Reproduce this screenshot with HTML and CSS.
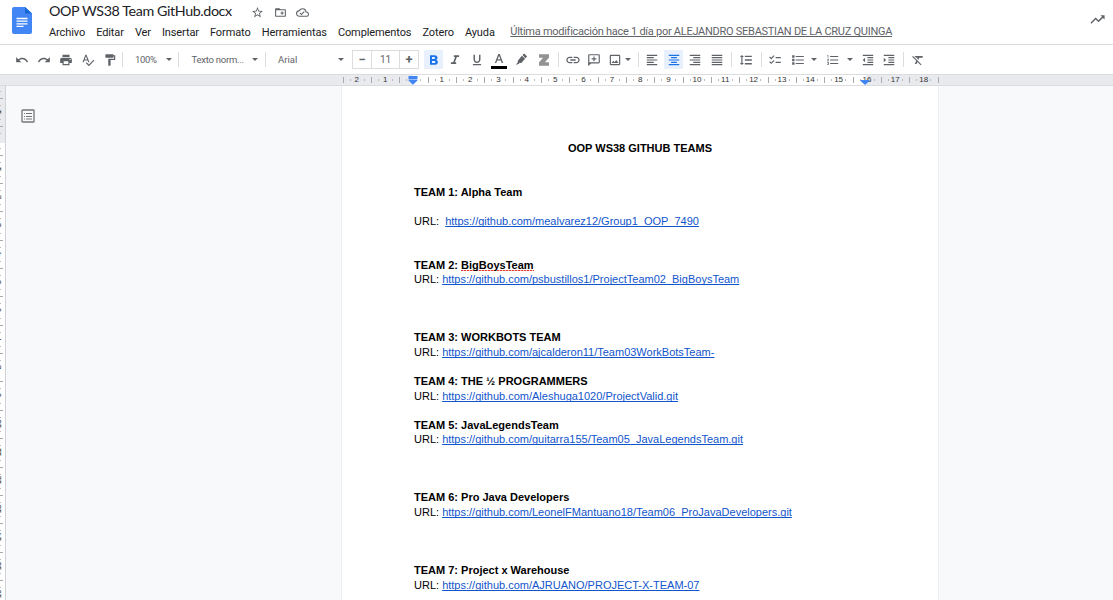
FILE: index.html
```html
<!DOCTYPE html>
<html lang="es">
<head>
<meta charset="utf-8">
<title>OOP WS38 Team GitHub.docx</title>
<link rel="stylesheet" href="styles.css">
</head>
<body>
<header class="header">
  <svg class="logo" viewBox="0 0 20 27"><path fill="#4285f4" d="M2 0h11l7 6.500V25a2 2 0 0 1-2 2H2a2 2 0 0 1-2-2V2a2 2 0 0 1 2-2z"/><path fill="#1967d2" d="M13 0l7 6.500h-7z"/><path stroke="#fff" stroke-width="1.300" d="M4.500 11.500h11M4.500 14.200h11M4.500 16.900h11M4.500 19.400h7"/></svg>
  <div class="heading">
    <div class="title-row">
      <span class="title">OOP WS38 Team GitHub.docx</span>
      <svg class="ic small" viewBox="0 0 24 24"><path d="M22 9.240l-7.190-.62L12 2 9.190 8.630 2 9.240l5.460 4.730L5.820 21 12 17.270 18.180 21l-1.630-7.030L22 9.240zM12 15.400l-3.760 2.270 1-4.280-3.320-2.880 4.380-.38L12 6.100l1.710 4.040 4.380.38-3.320 2.880 1 4.280L12 15.400z"/></svg>
      <svg class="ic small" viewBox="0 0 24 24"><path d="M20 6h-8l-2-2H4c-1.100 0-2 .9-2 2v12c0 1.100.9 2 2 2h16c1.100 0 2-.9 2-2V8c0-1.100-.9-2-2-2zm0 12H4V8h16v10zm-8-4h2v2h2v-2h2v-2h-2v-2h-2v2h-2z"/></svg>
      <svg class="ic small" viewBox="0 0 24 24"><path d="M19.350 10.040A7.490 7.490 0 0 0 12 4C9.110 4 6.600 5.640 5.350 8.040A5.994 5.994 0 0 0 0 14c0 3.310 2.690 6 6 6h13c2.760 0 5-2.240 5-5 0-2.640-2.050-4.780-4.650-4.960zM19 18H6c-2.210 0-4-1.790-4-4 0-2.050 1.530-3.760 3.560-3.970l1.070-.11.5-.95A5.469 5.469 0 0 1 12 6c2.620 0 4.880 1.860 5.390 4.430l.3 1.500 1.530.11A2.980 2.980 0 0 1 22 15c0 1.650-1.350 3-3 3zm-9-3.820l-2.090-2.090L6.500 13.500 10 17l6.010-6.010-1.410-1.410z"/></svg>
    </div>
    <nav class="menu">
      <span>Archivo</span><span>Editar</span><span>Ver</span><span>Insertar</span><span>Formato</span><span>Herramientas</span><span>Complementos</span><span>Zotero</span><span>Ayuda</span>
      <a class="modified">Última modificación hace 1 día por ALEJANDRO SEBASTIAN DE LA CRUZ QUINGA</a>
    </nav>
  </div>
  <svg class="ic trend" viewBox="0 0 24 24"><path d="M16 6l2.290 2.290-4.880 4.880-4-4L2 16.590 3.410 18l6-6 4 4 6.300-6.290L22 12V6z"/></svg>
</header>

<div class="toolbar">
  <span class="cell"><svg class="ic" viewBox="0 0 24 24"><path d="M12.500 8c-2.650 0-5.050.99-6.900 2.600L2 7v9h9l-3.620-3.620c1.390-1.160 3.160-1.880 5.120-1.880 3.540 0 6.550 2.310 7.600 5.500l2.370-.78C21.080 11.030 17.150 8 12.500 8z"/></svg></span>
  <span class="cell"><svg class="ic" viewBox="0 0 24 24"><path d="M18.400 10.600C16.550 8.990 14.150 8 11.500 8c-4.650 0-8.580 3.030-9.960 7.220L3.900 16c1.050-3.190 4.050-5.500 7.600-5.500 1.950 0 3.730.72 5.120 1.880L13 16h9V7l-3.600 3.600z"/></svg></span>
  <span class="cell"><svg class="ic" viewBox="0 0 24 24"><path d="M19 8H5c-1.660 0-3 1.340-3 3v6h4v4h12v-4h4v-6c0-1.660-1.340-3-3-3zm-3 11H8v-5h8v5zm3-7c-.55 0-1-.45-1-1s.45-1 1-1 1 .45 1 1-.45 1-1 1zm-1-9H6v4h12V3z"/></svg></span>
  <span class="cell"><svg class="ic" viewBox="0 0 24 24"><path d="M12.450 16h2.090L9.430 3H7.570L2.460 16h2.090l1.120-3h5.640l1.140 3zm-6.020-5L8.500 5.480 10.570 11H6.430zm15.160.59l-8.090 8.090L9.830 16l-1.410 1.410 5.090 5.090L23 13l-1.410-1.410z"/></svg></span>
  <span class="cell"><svg class="ic" viewBox="0 0 24 24"><path d="M18 4V3c0-.55-.45-1-1-1H5c-.55 0-1 .45-1 1v4c0 .55.450 1 1 1h12c.55 0 1-.45 1-1V6h1v4H9v11c0 .55.450 1 1 1h2c.55 0 1-.45 1-1v-9h8V4h-3z"/></svg></span>
  <i class="sep"></i>
  <span class="select zoom">100%<i class="arrow"></i></span>
  <i class="sep"></i>
  <span class="select style">Texto norm...<i class="arrow"></i></span>
  <i class="sep"></i>
  <span class="select font">Arial<i class="arrow"></i></span>
  <span class="size"><b>−</b><span>11</span><b>+</b></span>
  <span class="cell on"><svg class="ic bold" viewBox="0 0 24 24"><path d="M15.600 11.790c.97-.67 1.650-1.770 1.650-2.790 0-2.260-1.750-4-4-4H6v14h8.040c2.090 0 3.710-1.700 3.710-3.790 0-1.520-.86-2.820-2.150-3.420zM9 7.500h3c.83 0 1.500.67 1.500 1.500s-.67 1.500-1.500 1.500H9v-3zm3.500 9H9v-3h3.500c.83 0 1.500.67 1.500 1.500s-.67 1.500-1.500 1.500z"/></svg></span>
  <span class="cell"><svg class="ic" viewBox="0 0 24 24"><path d="M10 4v3h2.210l-3.420 9H5v3h9v-3h-2.210l3.420-9H19V4z"/></svg></span>
  <span class="cell"><svg class="ic" viewBox="0 0 24 24"><path d="M12 17c3.310 0 6-2.690 6-6V3h-2.500v8c0 1.930-1.570 3.500-3.500 3.500S8.500 12.930 8.500 11V3H6v8c0 3.310 2.690 6 6 6zm-7 2v2h14v-2H5z"/></svg></span>
  <span class="cell"><svg class="ic wide" viewBox="0 0 16 18"><path d="M7.300 3h1.500l3.400 9h-1.500l-.9-2.400H6.200L5.300 12H3.800zM6.700 8.300h2.700L8.050 4.700z"/><path fill="#000" d="M0 15h16v3H0z"/></svg></span>
  <span class="cell"><svg class="ic" viewBox="0 0 24 24"><path d="M14.500 3.500l3-2.500 5 5-3 3.200zM13.500 4.500l5.500 5.500-6 6.500c-1 1-2.300 1-3.200.3L8 19l-5 1 4-4.500c-.8-1-.7-2.300.2-3.200z"/></svg></span>
  <span class="cell zotero"><svg class="ic" viewBox="0 0 24 24"><path fill="#929292" d="M3.500 2h17v6l-7 8h7v6h-17v-6l7-8h-7z"/></svg></span>
  <i class="sep"></i>
  <span class="cell"><svg class="ic link" viewBox="0 0 24 24"><path d="M3.900 12c0-1.710 1.390-3.100 3.100-3.100h4V7H7c-2.760 0-5 2.240-5 5s2.240 5 5 5h4v-1.900H7c-1.710 0-3.100-1.390-3.100-3.100zM8 13h8v-2H8v2zm9-6h-4v1.900h4c1.710 0 3.100 1.390 3.100 3.100s-1.390 3.100-3.100 3.100h-4V17h4c2.760 0 5-2.240 5-5s-2.240-5-5-5z"/></svg></span>
  <span class="cell"><svg class="ic" viewBox="0 0 24 24"><path d="M2 4c0-1.100.9-2 2-2h16c1.100 0 2 .9 2 2v12c0 1.100-.9 2-2 2H7l-4 4H2zM20 16V4H4v12zM11 14h2v-3h3V9h-3V6h-2v3H8v2h3z"/></svg></span>
  <span class="cell pair image"><svg class="ic" viewBox="0 0 24 24"><path d="M19 5v14H5V5h14m0-2H5c-1.100 0-2 .9-2 2v14c0 1.100.9 2 2 2h14c1.100 0 2-.9 2-2V5c0-1.100-.9-2-2-2zm-4.860 8.860l-3 3.870L9 13.140 6 17h12l-3.860-5.140z"/></svg><i class="arrow"></i></span>
  <i class="sep"></i>
  <span class="cell"><svg class="ic" viewBox="0 0 24 24"><path d="M15 15H3v2h12v-2zm0-8H3v2h12V7zM3 13h18v-2H3v2zm0 8h18v-2H3v2zM3 3v2h18V3H3z"/></svg></span>
  <span class="cell on"><svg class="ic" viewBox="0 0 24 24"><path d="M7 15v2h10v-2H7zm-4 6h18v-2H3v2zm0-8h18v-2H3v2zm4-6v2h10V7H7zM3 3v2h18V3H3z"/></svg></span>
  <span class="cell"><svg class="ic" viewBox="0 0 24 24"><path d="M3 21h18v-2H3v2zm6-4h12v-2H9v2zm-6-4h18v-2H3v2zm6-4h12V7H9v2zM3 3v2h18V3H3z"/></svg></span>
  <span class="cell"><svg class="ic" viewBox="0 0 24 24"><path d="M3 21h18v-2H3v2zm0-4h18v-2H3v2zm0-4h18v-2H3v2zm0-4h18V7H3v2zm0-6v2h18V3H3z"/></svg></span>
  <i class="sep"></i>
  <span class="cell"><svg class="ic" viewBox="0 0 24 24"><path d="M6 7h2.500L5 3.500 1.500 7H4v10H1.500L5 20.500 8.500 17H6V7zm4-2.500v2.500h12V4.500H10zm0 15h12V17H10v2.500zm0-6.200h12v-2.500H10v2.500z"/></svg></span>
  <i class="sep"></i>
  <span class="cell"><svg class="ic" viewBox="0 0 24 24"><path d="M22 7h-9v2h9V7zm0 8h-9v2h9v-2zM5.540 11L2 7.460l1.410-1.410 2.120 2.120 4.240-4.240 1.410 1.410L5.540 11zm0 8L2 15.460l1.410-1.410 2.120 2.120 4.240-4.240 1.410 1.410L5.540 19z"/></svg></span>
  <span class="cell pair bullets"><svg class="ic" viewBox="0 0 24 24"><path d="M2 4h4v4H2zm0 6h4v4H2zm0 6h4v4H2zM8 5h14v2H8zm0 6h14v2H8zm0 6h14v2H8z"/></svg><i class="arrow"></i></span>
  <span class="cell pair numbers"><svg class="ic" viewBox="0 0 24 24"><path d="M2 17h2v.5H3v1h1v.5H2v1h3v-4H2v1zm1-9h1V4H2v1h1v3zm-1 3h1.800L2 13.100v.9h3v-1H3.200L5 10.900V10H2v1zm5-6v2h14V5H7zm0 14h14v-2H7v2zm0-6h14v-2H7v2z"/></svg><i class="arrow"></i></span>
  <span class="cell"><svg class="ic" viewBox="0 0 24 24"><path d="M11 17h10v-2H11v2zm-8-5l4 4V8l-4 4zm0 9h18v-2H3v2zM3 3v2h18V3H3zm8 6h10V7H11v2zm0 4h10v-2H11v2z"/></svg></span>
  <span class="cell"><svg class="ic" viewBox="0 0 24 24"><path d="M3 21h18v-2H3v2zM3 8v8l4-4-4-4zm8 9h10v-2H11v2zM3 3v2h18V3H3zm8 6h10V7H11v2zm0 4h10v-2H11v2z"/></svg></span>
  <i class="sep"></i>
  <span class="cell"><svg class="ic" viewBox="0 0 24 24"><path d="M3.270 5L2 6.270l6.970 6.970L6.500 19h3l1.570-3.660L16.730 21 18 19.730 3.550 5.270 3.270 5zM6 5v.18L8.820 8h2.400l-.72 1.680 2.100 2.100L14.210 8H20V5H6z"/></svg></span>
</div>

<div class="ruler">
  <div class="marks">
    <span>2</span><span>1</span><span><svg class="start" viewBox="0 0 10 9"><path fill="#4285f4" d="M.5 0h9v3h-9zM.5 3.600h9v1L5 8.700.5 4.600z"/></svg></span><span>1</span><span>2</span><span>3</span><span>4</span><span>5</span><span>6</span><span>7</span><span>8</span><span>9</span><span>10</span><span>11</span><span>12</span><span>13</span><span>14</span><span>15</span><span>16<svg class="end" viewBox="0 0 10 5"><path fill="#4285f4" d="M.5 0h9v1L5 5 .5 1z"/></svg></span><span>17</span><span>18</span><i></i>
  </div>
</div>

<main class="workspace">
  <div class="vruler"><span>1</span><span></span><span>1</span><span>2</span><span>3</span><span>4</span><span>5</span><span>6</span><span>7</span><span>8</span><span>9</span><span>10</span><span>11</span><span>12</span><span>13</span><span>14</span><span>15</span><span>16</span></div>
  <aside class="outline"><svg viewBox="0 0 14 14"><rect x="1" y="1" width="12" height="12" rx=".6" fill="none" stroke="#747679" stroke-width="1.300"/><path stroke="#747679" d="M3 4.500h1M3 7.500h1M3 10h1M5 4.500h6M5 7.500h6M5 10h6"/></svg></aside>
  <article class="page">
    <h1>OOP WS38 GITHUB TEAMS</h1>
    <section class="after2"><h2>TEAM 1: Alpha Team</h2><p class="apart">URL:&nbsp; <a>https://github.com/mealvarez12/Group1_OOP_7490</a></p></section>
    <section class="after3"><h2>TEAM 2: <span class="misspelled">BigBoysTeam</span></h2><p>URL: <a>https://github.com/psbustillos1/ProjectTeam02_BigBoysTeam</a></p></section>
    <section class="after1"><h2>TEAM 3: WORKBOTS TEAM</h2><p>URL: <a>https://github.com/ajcalderon11/Team03WorkBotsTeam-</a></p></section>
    <section class="after1"><h2>TEAM 4: THE ½ PROGRAMMERS</h2><p>URL: <a>https://github.com/Aleshuga1020/ProjectValid.git</a></p></section>
    <section class="after3"><h2>TEAM 5: JavaLegendsTeam</h2><p>URL: <a>https://github.com/guitarra155/Team05_JavaLegendsTeam.git</a></p></section>
    <section class="after3"><h2>TEAM 6: Pro Java Developers</h2><p>URL: <a>https://github.com/LeonelFMantuano18/Team06_ProJavaDevelopers.git</a></p></section>
    <section><h2>TEAM 7: Project x Warehouse</h2><p>URL: <a>https://github.com/AJRUANO/PROJECT-X-TEAM-07</a></p></section>
  </article>
</main>
</body>
</html>
```
FILE: styles.css
```css
* { box-sizing: border-box; }
body { margin: 0; height: 600px; overflow: hidden; background: #fff; font-family: Roboto, "Liberation Sans", sans-serif; color: #202124; display: flex; flex-direction: column; }
.header { height: 45px; flex: none; display: flex; border-bottom: 1px solid #dadce0; padding-left: 12px; }
.logo { width: 20px; height: 27px; margin-top: 7px; flex: none; }
.heading { margin-left: 17px; flex: 1; }
.title-row { display: flex; align-items: center; height: 24px; }
.title { font: 14.300px/22px Lato, sans-serif; letter-spacing: -.4px; width: 202px; height: 24px; white-space: nowrap; }
.ic { width: 14px; height: 14px; fill: #5f6368; flex: none; display: block; }
.small { width: 13px; height: 13px; margin-right: 9.500px; }
.trend { width: 17px; height: 17px; margin: 11px 7px 0 0; }
.menu { display: flex; gap: 11px; font-size: 11px; line-height: 16px; padding-top: 1px; letter-spacing: -.1px; white-space: nowrap; }
.modified { color: #5f6368; margin: -1px 0 0 4.500px; letter-spacing: -.265px; text-decoration: underline; }

.toolbar {
  height: 29px; flex: none; padding-left: 11px; display: grid; align-items: center;
  grid-template-columns: repeat(5, 22px) 3px 53px 3px 84px 3px 85px 70.500px 22px 21.500px 22px 22px 22px 22.500px 8px 21.200px 21.200px 31.100px 5.500px repeat(4, 21.600px) 7.100px 22px 9px 19px 36px 36px 22px 21px 7px 22px;
}
.cell { display: grid; place-items: center; height: 19px; }
.on { width: 19px; justify-self: center; background: #e8f0fe; border-radius: 1px; }
.on .ic { fill: #1a73e8; }
.bold { width: 16px; height: 16px; }
.wide { width: 16px; height: 18px; }
.link { width: 16px; height: 16px; }
.zotero { padding-left: 1px; }
.sep { width: 1px; height: 15px; background: #dadce0; justify-self: center; }
.arrow { border: 3px solid transparent; border-top: 3.500px solid #5f6368; border-bottom: 0; }
.select { display: flex; align-items: center; justify-content: space-between; font-size: 9.500px; color: #5f6368; white-space: nowrap; }
.zoom { padding: 0 5px 0 11px; letter-spacing: -.3px; }
.style { padding: 0 6px 0 11.500px; letter-spacing: -.25px; }
.font { padding: 0 8px 0 11px; }
.size { width: 67px; height: 19px; display: grid; grid-template-columns: 18px 1fr 18px; border: 1px solid #dadce0; font-size: 10px; line-height: 17px; text-align: center; color: #5f6368; }
.size span { border: 1px solid #dadce0; border-width: 0 1px; }
.size b { font-size: 13px; }
.pair { display: flex; align-items: center; padding-left: 5px; gap: 4px; }
.image { padding-left: 3.500px; gap: 3px; }
.bullets { padding-left: 6px; gap: 6px; }
.numbers { gap: 7px; }

.ruler { flex: none; height: 12px; border: 1px solid #dadce0; border-width: 1px 0; padding-left: 342.600px; background: linear-gradient(90deg, #e8eaed 413px, #fff 413px, #fff 866px, #e8eaed 866px); }
.marks { display: flex; height: 10px; font: 8px/9px "Liberation Sans", sans-serif; color: #333; }
.marks span { position: relative; width: 28.350px; flex: none; text-align: center; background: linear-gradient(#aaa, #aaa) 0 2px / 1px 6px no-repeat, linear-gradient(#bbb, #bbb) 7px 4px / 1px 2px no-repeat, linear-gradient(#bbb, #bbb) 21px 4px / 1px 2px no-repeat; }
.marks i { width: 1px; height: 6px; margin-top: 2px; background: #aaa; }
.start { position: absolute; width: 10px; height: 9px; left: 9.200px; top: 1px; }
.end { position: absolute; width: 10px; height: 5px; left: 7px; top: 5px; }

.workspace { flex: 1; min-height: 0; display: flex; background: #f8f9fa; overflow: hidden; }
.vruler {
  width: 6px; flex: none; padding-top: 12px; border-right: 1px solid #d0d2d5; overflow: hidden;
  background: repeating-linear-gradient(transparent 0 12px, #aaa 12px 13px, transparent 13px 28.350px) 0 0 / 3px 100% no-repeat, repeating-linear-gradient(transparent 0 5px, #bbb 5px 6px, transparent 6px 19px, #bbb 19px 20px, transparent 20px 28.350px) 0 0 / 1px 100% no-repeat, linear-gradient(#e8eaed 57px, #fff 57px);
}
.vruler span { display: flex; align-items: center; justify-content: center; width: 8px; height: 28.350px; margin-left: -5px; font: 8px/8px "Liberation Sans", sans-serif; color: #111; writing-mode: vertical-rl; transform: rotate(180deg); }
.outline { width: 336px; flex: none; padding: 23px 0 0 15px; }
.outline svg { width: 14px; height: 14px; display: block; }
.page { width: 596px; height: 514px; flex: none; background: #fff; outline: 1px solid #eceef0; padding: 55.100px 72px 0; font: 11px/14.560px "Liberation Sans", sans-serif; color: #000; white-space: nowrap; overflow: hidden; }
h1, h2, p { margin: 0; font-size: 11px; }
h1 { text-align: center; margin-bottom: 29.120px; }
.apart { margin-top: 14.560px; }
.after1 { margin-bottom: 14.560px; }
.after2 { margin-bottom: 29.120px; }
.after3 { margin-bottom: 43.680px; }
.page a { color: #1155cc; text-decoration: underline; text-decoration-skip-ink: none; }
.misspelled { background: repeating-linear-gradient(90deg, #e53935 0 2px, #f5b5b3 2px 3px) 0 100% / 100% 1px no-repeat; }
```
